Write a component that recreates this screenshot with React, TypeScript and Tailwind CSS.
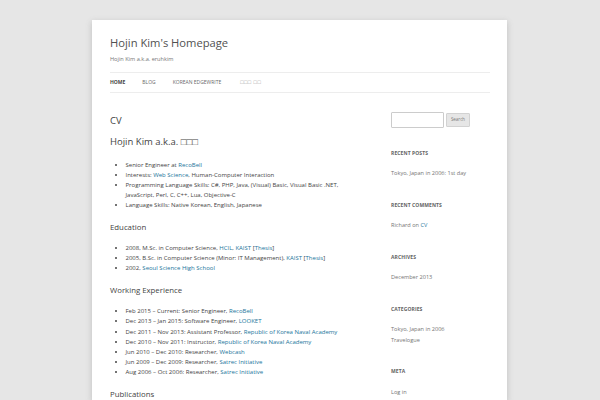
import React from "react";

const link = "text-[#21759b]";

function Widget({ title, children }: { title: string; children: React.ReactNode }) {
  return (
    <div className="mb-[21.8px]">
      <h3 className="text-[5px] leading-[8px] font-bold uppercase tracking-[0.1px] text-[#636363]">{title}</h3>
      <ul className="mt-[11.8px] text-[5.6px] leading-[10.4px] text-[#757575]">{children}</ul>
    </div>
  );
}

export default function App() {
  return (
    <div
      className="min-h-[400px] bg-[#e6e6e6] pt-[20px]"
      style={{ fontFamily: '"Open Sans", "Liberation Sans", sans-serif' }}
    >
      <div className="ml-[92px] w-[415px] bg-white px-[18px] pt-[14.5px] shadow-[0_2px_6px_rgba(100,100,100,0.3)] h-[380px] overflow-hidden">
        <div className="w-[380px]">
          <header>
            <h1 className="text-[11.2px] leading-[15px] text-[#515151]">Hojin Kim&apos;s Homepage</h1>
            <p className="mt-[5px] text-[5.6px] leading-[8px] text-[#757575]">Hojin Kim a.k.a. eruhkim</p>
            <nav className="mt-[9.5px] h-[20.5px] border-y border-[#ededed] flex items-center gap-[17px] text-[5px] uppercase text-[#6a6a6a]">
              <span className="font-bold text-[#444]">Home</span>
              <span>Blog</span>
              <span>Korean EdgeWrite</span>
              <span className="ml-[2px] text-[5.5px] tracking-[0.5px] text-[#999]">□□□ □□</span>
            </nav>
          </header>
          <div className="flex justify-between mt-[22px]">
            <main className="w-[247px] text-[#444]">
              <h1 className="text-[9.5px] leading-[12px] text-[#444]">CV</h1>
              <h1 className="mt-[8px] text-[9.5px] leading-[14px] text-[#444]">Hojin Kim a.k.a. □□□</h1>
              <ul className="mt-[11px] list-disc pl-[15.5px] text-[6px] leading-[10.2px]">
                <li>Senior Engineer at <span className={link}>RecoBell</span></li>
                <li>Interests: <span className={link}>Web Science</span>, Human-Computer Interaction</li>
                <li>Programming Language Skills: C#, PHP, Java, (Visual) Basic, Visual Basic .NET, JavaScript, Perl, C, C++, Lua, Objective-C</li>
                <li>Language Skills: Native Korean, English, Japanese</li>
              </ul>
              <h2 className="mt-[11px] text-[7.8px] leading-[11px] text-[#444]">Education</h2>
              <ul className="mt-[10.5px] list-disc pl-[15.5px] text-[6px] leading-[10.2px]">
                <li>2008, M.Sc. in Computer Science, <span className={link}>HCIL</span>, <span className={link}>KAIST</span> [<span className={link}>Thesis</span>]</li>
                <li>2005, B.Sc. in Computer Science (Minor: IT Management), <span className={link}>KAIST</span> [<span className={link}>Thesis</span>]</li>
                <li>2002, <span className={link}>Seoul Science High School</span></li>
              </ul>
              <h2 className="mt-[11px] text-[7.8px] leading-[11px] text-[#444]">Working Experience</h2>
              <ul className="mt-[10.5px] list-disc pl-[15.5px] text-[6px] leading-[10.2px]">
                <li>Feb 2015 – Current: Senior Engineer, <span className={link}>RecoBell</span></li>
                <li>Dec 2013 – Jan 2015: Software Engineer, <span className={link}>LOOKET</span></li>
                <li>Dec 2011 – Nov 2013: Assistant Professor, <span className={link}>Republic of Korea Naval Academy</span></li>
                <li>Dec 2010 – Nov 2011: Instructor, <span className={link}>Republic of Korea Naval Academy</span></li>
                <li>Jun 2010 – Dec 2010: Researcher, <span className={link}>Webcash</span></li>
                <li>Jun 2009 – Dec 2009: Researcher, <span className={link}>Satrec Initiative</span></li>
                <li>Aug 2006 – Oct 2006: Researcher, <span className={link}>Satrec Initiative</span></li>
              </ul>
              <h2 className="mt-[11px] text-[7.8px] leading-[11px] text-[#444]">Publications</h2>
            </main>
            <aside className="w-[99px] -mt-[3px]">
              <div className="mb-[21px] flex items-center gap-[2px]">
                <div className="w-[53px] h-[16px] border border-[#ccc] rounded-[1px] bg-white" />
                <button className="w-[24px] h-[14px] rounded-[1px] border border-[#d2d2d2] bg-[#e6e6e6] text-[4.5px] text-[#7c7c7c]">
                  Search
                </button>
              </div>
              <Widget title="Recent Posts">
                <li>Tokyo, Japan in 2006: 1st day</li>
              </Widget>
              <Widget title="Recent Comments">
                <li>Richard on <span className={link}>CV</span></li>
              </Widget>
              <Widget title="Archives">
                <li>December 2013</li>
              </Widget>
              <Widget title="Categories">
                <li>Tokyo, Japan in 2006</li>
                <li>Travelogue</li>
              </Widget>
              <Widget title="Meta">
                <li>Log in</li>
              </Widget>
            </aside>
          </div>
        </div>
      </div>
    </div>
  );
}
